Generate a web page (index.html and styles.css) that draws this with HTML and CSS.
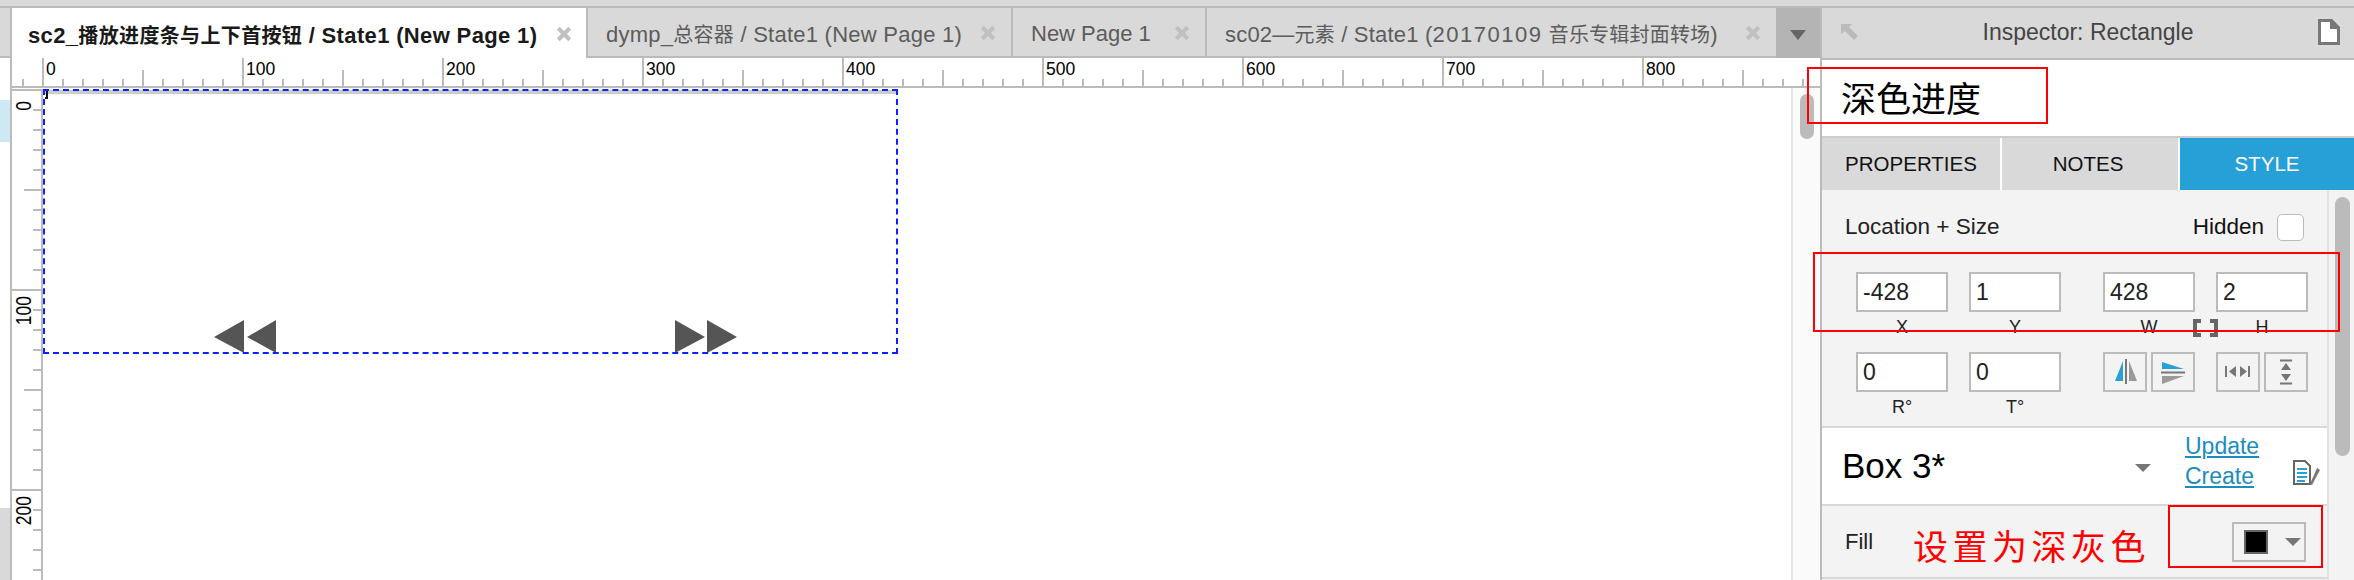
FILE: index.html
```html
<!DOCTYPE html>
<html lang="en">
<head>
  <meta charset="UTF-8">
  <title>Inspector: Rectangle</title>
  <link rel="stylesheet" href="styles.css">
</head>
<body>

<div class="app">
  <div class="topline"></div>
  <div class="main">

    <section class="workspace">
      <div class="tabs">
        <div class="tab-edge"></div>
        <div class="tab tab-active tab-1">
          <span>sc2_<span class="cjk">播放进度条与上下首按钮</span> / State1 (New Page 1)</span>
          <svg class="close" viewBox="0 0 14 14"><path d="M2 2l10 10M12 2L2 12"/></svg>
        </div>
        <div class="tab tab-2">
          <span>dymp_<span class="cjk">总容器</span> / State1 (New Page 1)</span>
          <svg class="close" viewBox="0 0 14 14"><path d="M2 2l10 10M12 2L2 12"/></svg>
        </div>
        <div class="tab tab-3">
          <span>New Page 1</span>
          <svg class="close" viewBox="0 0 14 14"><path d="M2 2l10 10M12 2L2 12"/></svg>
        </div>
        <div class="tab tab-4">
          <span>sc02—<span class="cjk">元素</span> / State1 (<span class="digits">20170109</span> <span class="cjk">音乐专辑封面转场</span>)</span>
          <svg class="close" viewBox="0 0 14 14"><path d="M2 2l10 10M12 2L2 12"/></svg>
        </div>
        <div class="tab-menu"><div class="tri tri-tab"></div></div>
      </div>

      <div class="sheet">
        <div class="edge">
          <div class="edge-blue"></div>
          <div class="edge-gray"></div>
        </div>
        <div class="sheet-body">
          <div class="hruler">
            <div class="hlabel">0</div>
            <div class="hlabel">100</div>
            <div class="hlabel">200</div>
            <div class="hlabel">300</div>
            <div class="hlabel">400</div>
            <div class="hlabel">500</div>
            <div class="hlabel">600</div>
            <div class="hlabel">700</div>
            <div class="hlabel">800</div>
          </div>
          <div class="sheet-row">
            <div class="vruler">
              <div class="vlabel"><span>0</span></div>
              <div class="vlabel"><span>100</span></div>
              <div class="vlabel"><span>200</span></div>
            </div>
            <div class="canvas">
              <div class="bar"></div>
              <div class="mark"></div>
              <svg class="arrows arrows-prev" viewBox="0 0 62 33"><path d="M30 0v33L0 17zM62 0v33L33 17z"/></svg>
              <svg class="arrows arrows-next" viewBox="0 0 62 33"><path d="M0 0v33l30-16zM32 0v33l30-16z"/></svg>
              <div class="selection"></div>
            </div>
            <div class="vscroll"><div class="vscroll-thumb"></div></div>
          </div>
        </div>
      </div>
    </section>

    <section class="inspector">
      <div class="insp-head">
        <svg class="icon-back" viewBox="0 0 17 16"><path d="M0 0h11L8 3l9 9-4 4-9-9-4 3z"/></svg>
        <span>Inspector: Rectangle</span>
        <svg class="icon-doc" viewBox="0 0 22 26"><path d="M1.500 1.500h12l7 7v16h-19z"/><path d="M13.500 1.500v7h7"/></svg>
      </div>
      <div class="insp-name">深色进度</div>
      <div class="insp-tabs">
        <div class="insp-tab">PROPERTIES</div>
        <div class="insp-tab insp-tab-notes">NOTES</div>
        <div class="insp-tab insp-tab-on">STYLE</div>
      </div>

      <div class="insp-body">
        <div class="insp-main">
          <div class="loc-row">
            <span>Location + Size</span>
            <div class="hidden-box">
              <span>Hidden</span>
              <div class="check"></div>
            </div>
          </div>

          <div class="field-row">
            <div class="field"><div class="num">-428</div><div class="field-label">X</div></div>
            <div class="field"><div class="num">1</div><div class="field-label">Y</div></div>
            <div class="field field-wide">
              <div class="num">428</div><div class="field-label">W</div>
              <svg class="icon-lock" viewBox="0 0 25 18"><path d="M8 2H2v14h6M17 2h6v14h-6"/></svg>
            </div>
            <div class="field"><div class="num">2</div><div class="field-label">H</div></div>
          </div>

          <div class="field-row field-row-2">
            <div class="field"><div class="num">0</div><div class="field-label">R°</div></div>
            <div class="field"><div class="num">0</div><div class="field-label">T°</div></div>
            <div class="field field-wide">
              <div class="icon-btns">
                <div class="icon-btn">
                  <svg viewBox="0 0 40 36">
                    <path class="blue" d="M10 27h8V7z"/>
                    <path class="grey" d="M24 7v20h8z"/>
                    <path class="rule" d="M21 5v25"/>
                  </svg>
                </div>
                <div class="icon-btn">
                  <svg viewBox="0 0 40 36">
                    <path class="blue" d="M9 8v7h22z"/>
                    <path class="grey" d="M9 22h22L9 30z"/>
                    <path class="rule" d="M8 18.500h24"/>
                  </svg>
                </div>
              </div>
            </div>
            <div class="field">
              <div class="icon-btns">
                <div class="icon-btn">
                  <svg viewBox="0 0 40 36">
                    <path class="dark" d="M18 12v11l-7-5.500zM22 12v11l7-5.500z"/>
                    <path class="rule" d="M8 12v11M31 12v11"/>
                  </svg>
                </div>
                <div class="icon-btn">
                  <svg viewBox="0 0 40 36">
                    <path class="dark" d="M20 9l-5 7h10zM20 27l-5-7h10z"/>
                    <path class="rule" d="M14 6.500h12M14 29.500h12"/>
                  </svg>
                </div>
              </div>
            </div>
          </div>

          <div class="box-row">
            <div class="box-name">Box 3*</div>
            <div class="tri tri-box"></div>
            <div class="box-links">
              <a href="#">Update</a>
              <a href="#">Create</a>
            </div>
            <svg class="icon-note" viewBox="0 0 27 25">
              <path class="note-page" d="M1 1h11l5 5v18H1z"/>
              <path class="note-lines" d="M4 9h10M4 13h10M4 17h10M4 21h8"/>
              <path class="note-pen" d="M24 8l3 2-8 15-2-1z"/>
            </svg>
          </div>

          <div class="fill-row">
            <span class="fill-label">Fill</span>
            <span class="fill-note">设置为深灰色</span>
            <div class="fill-btn">
              <div class="swatch"></div>
              <div class="tri tri-fill"></div>
            </div>
          </div>
        </div>
        <div class="insp-gutter"><div class="insp-thumb"></div></div>
      </div>
    </section>
  </div>

  <!-- red notes drawn over the screen -->
  <div class="note note-name"></div>
  <div class="note note-size"></div>
  <div class="note note-fill"></div>
</div>

</body>
</html>
```

FILE: styles.css
```css
* {
  box-sizing: border-box;
}

html, body {
  margin: 0;
  height: 100%;
  overflow: hidden;
}

body {
  font-family: "Liberation Sans", "Noto Sans CJK SC", sans-serif;
  background-color: #fff;
  color: #111;
}

.app {
  position: relative;
  width: 2354px;
  height: 580px;
  overflow: hidden;
}

.topline {
  height: 8px;
  background-color: #d9d9d9;
  border-bottom: 2px solid #bbb;
}

.main {
  display: flex;
  height: 572px;
}

.workspace {
  width: 1820px;
  display: flex;
  flex-direction: column;
}

/* tabs */
.tabs {
  display: flex;
  height: 50px;
  flex: none;
}

.tab-edge {
  width: 10px;
  background-color: #d9d9d9;
  border-bottom: 2px solid #bbb;
}

.tab {
  display: flex;
  align-items: center;
  justify-content: space-between;
  padding: 0 15px 0 18px;
  background-color: #d9d9d9;
  border-right: 2px solid #bbb;
  border-bottom: 2px solid #bbb;
  color: #5c5c5c;
  font-size: 22px;
  white-space: nowrap;
}

.tab > span {
  margin-top: 3px;
}

.cjk {
  font-size: 20px;
}

.digits {
  letter-spacing: 1.500px;
}

.tab-active {
  background-color: #fff;
  border-left: 2px solid #bbb;
  border-bottom: none;
  color: #1a1a1a;
  font-weight: bold;
  padding-left: 16px;
  padding-right: 14px;
}

.tab-1 { width: 578px; letter-spacing: 0.350px; }
.tab-2 { width: 425px; letter-spacing: 0.250px; }
.tab-3 { width: 194px; }
.tab-4 { width: 569px; border-right: none; letter-spacing: 0.200px; }

.close {
  width: 16px;
  height: 16px;
  flex: none;
  margin-top: 1px;
}

.close path {
  fill: none;
  stroke: #c0c0c0;
  stroke-width: 3.500;
}

.tab-menu {
  flex: 1;
  display: flex;
  align-items: center;
  justify-content: center;
  background-color: #b4b4b4;
  padding-top: 4px;
}

.tri {
  width: 0;
  height: 0;
  border-style: solid;
  border-color: #777 transparent transparent transparent;
}

.tri-tab {
  border-width: 10px 8px 0 8px;
  border-top-color: #666;
}

/* sheet and rulers */
.sheet {
  flex: 1;
  display: flex;
  min-height: 0;
}

.edge {
  width: 12px;
  flex: none;
  display: flex;
  flex-direction: column;
  border-right: 2px solid #bbb;
}

.edge-blue {
  height: 42px;
  margin-top: 42px;
  background-color: #cde9f3;
}

.edge-gray {
  margin-top: auto;
  height: 72px;
  background-color: #d9d9d9;
}

.sheet-body {
  flex: 1;
  display: flex;
  flex-direction: column;
  min-width: 0;
}

.hruler {
  display: flex;
  height: 30px;
  flex: none;
  padding-left: 30px;
  border-bottom: 2px solid #bbb;
  background-image:
    linear-gradient(90deg, #bbb 2px, transparent 2px),
    linear-gradient(90deg, #bbb 2px, transparent 2px),
    linear-gradient(90deg, #bbb 2px, transparent 2px);
  background-size: 200px 28px, 100px 16px, 20px 7px;
  background-position: 30px bottom, 30px bottom, 30px bottom;
  background-repeat: repeat-x;
}

.hlabel {
  width: 200px;
  flex: none;
  padding: 1px 0 0 4px;
  font-size: 17.500px;
  line-height: 20px;
  color: #000;
}

.sheet-row {
  flex: 1;
  display: flex;
  min-height: 0;
}

.vruler {
  width: 31px;
  flex: none;
  border-right: 2px solid #bbb;
  margin-top: 1px;
  background-image:
    linear-gradient(#bbb 2px, transparent 2px),
    linear-gradient(#bbb 2px, transparent 2px),
    linear-gradient(#bbb 2px, transparent 2px);
  background-size: 29px 200px, 17px 100px, 8px 20px;
  background-position: right top;
  background-repeat: repeat-y;
}

.vlabel {
  height: 200px;
  padding: 7px 0 0 2px;
  font-size: 17.500px;
  line-height: 18px;
  color: #000;
}

.vlabel span {
  display: inline-block;
  writing-mode: vertical-rl;
  transform: rotate(180deg) scaleX(1.25);
}

.canvas {
  position: relative;
  flex: 1;
}

.bar {
  position: absolute;
  left: 0;
  top: 2px;
  width: 854px;
  height: 4px;
  background-color: #ccc;
}

.mark {
  position: absolute;
  left: 2px;
  top: 2px;
  width: 3px;
  height: 9px;
  border-right: 2px solid #111;
  border-bottom: 2px solid #111;
}

.arrows {
  position: absolute;
  top: 232px;
  width: 62px;
  height: 33px;
  fill: #555;
}

.arrows-prev { left: 171px; }
.arrows-next { left: 632px; }

.selection {
  position: absolute;
  left: 0;
  top: 1px;
  width: 855px;
  height: 265px;
  border: 2px dashed #0a22ff;
}

.vscroll {
  width: 29px;
  flex: none;
  padding: 6px 6px 0 7px;
  background-color: #fafafa;
  border-left: 2px solid #e6e6e6;
}

.vscroll-thumb {
  height: 45px;
  border-radius: 8px;
  background-color: #bbb;
}

/* inspector */
.inspector {
  flex: 1;
  display: flex;
  flex-direction: column;
  border-left: 2px solid #bbb;
  min-width: 0;
}

.insp-head {
  height: 52px;
  flex: none;
  display: flex;
  align-items: center;
  justify-content: space-between;
  padding: 0 14px 2px 19px;
  background-color: #d9d9d9;
  border-bottom: 2px solid #bbb;
  color: #444;
  font-size: 23px;
}

.icon-back {
  width: 17px;
  height: 16px;
  fill: #bbb;
}

.icon-doc {
  width: 22px;
  height: 26px;
}

.icon-doc path {
  fill: #fff;
  stroke: #777;
  stroke-width: 3;
}

.icon-doc path + path {
  fill: #777;
}

.insp-name {
  height: 78px;
  flex: none;
  padding: 18px 0 0 19px;
  border-bottom: 2px solid #ccc;
  color: #000;
  font-size: 35px;
  line-height: 44px;
}

.insp-tabs {
  display: grid;
  grid-template-columns: 178px 176px 1fr;
  column-gap: 2px;
  height: 52px;
  flex: none;
}

.insp-tab {
  display: flex;
  align-items: center;
  justify-content: center;
  background-color: #d9d9d9;
  font-size: 20.500px;
}

.insp-tab-notes {
  padding-right: 4px;
}

.insp-tab-on {
  background-color: #27a0d8;
  color: #fff;
}

.insp-body {
  flex: 1;
  display: flex;
  background-color: #f3f3f3;
  min-height: 0;
}

.insp-main {
  flex: 1;
  border-right: 2px solid #e2e2e2;
  min-width: 0;
}

.insp-gutter {
  width: 25px;
  flex: none;
  padding: 7px 4px 0 6px;
}

.insp-thumb {
  height: 259px;
  border-radius: 8px;
  background-color: #bbb;
}

.loc-row {
  display: flex;
  align-items: center;
  justify-content: space-between;
  height: 74px;
  margin-bottom: 8px;
  padding: 0 23px;
  font-size: 22.500px;
  color: #222;
}

.hidden-box {
  display: flex;
  align-items: center;
  gap: 13px;
  color: #111;
}

.check {
  width: 27px;
  height: 27px;
  background-color: #fff;
  border: 1px solid #bbb;
  border-radius: 5px;
}

.field-row {
  display: flex;
  gap: 21px;
  padding-left: 34px;
}

.field-row-2 {
  margin-top: 10px;
  padding-bottom: 4px;
  border-bottom: 2px solid #d8d8d8;
}

.field {
  position: relative;
  width: 92px;
  flex: none;
}

.field-wide {
  margin-left: 21px;
}

.num {
  height: 40px;
  padding-left: 5px;
  background-color: #fff;
  border: 2px solid #bbb;
  font-size: 23px;
  line-height: 36px;
  color: #222;
}

.field-label {
  height: 30px;
  text-align: center;
  font-size: 18px;
  line-height: 31px;
  color: #222;
}

.icon-lock {
  position: absolute;
  left: 90px;
  top: 47px;
  width: 25px;
  height: 18px;
  fill: none;
  stroke: #666;
  stroke-width: 4;
}

.icon-btns {
  display: flex;
  gap: 4px;
}

.icon-btn {
  width: 44px;
  height: 40px;
  border: 2px solid #bbb;
}

.icon-btn svg {
  display: block;
  width: 40px;
  height: 36px;
}

.blue { fill: #27a0d8; }
.grey { fill: #999; }
.dark { fill: #777; }

.rule {
  fill: none;
  stroke: #777;
  stroke-width: 2;
}

.box-row {
  display: flex;
  align-items: center;
  height: 78px;
  padding-left: 20px;
  background-color: #fff;
  border-bottom: 2px solid #d8d8d8;
}

.box-name {
  width: 293px;
  font-size: 35px;
  color: #000;
}

.tri-box {
  border-width: 8px 8px 0 8px;
  margin-top: 4px;
}

.box-links {
  display: flex;
  flex-direction: column;
  gap: 3px;
  margin: 0 0 10px 34px;
  font-size: 23px;
  line-height: 27px;
}

.box-links a {
  color: #1c8cc0;
}

.icon-note {
  width: 27px;
  height: 25px;
  margin: 12px 0 0 34px;
}

.note-page {
  fill: #fff;
  stroke: #666;
  stroke-width: 2;
}

.note-lines {
  fill: none;
  stroke: #27a0d8;
  stroke-width: 2;
}

.note-pen {
  fill: #777;
}

.fill-row {
  display: flex;
  align-items: center;
  height: 73px;
  padding-left: 23px;
  border-bottom: 2px solid #d8d8d8;
}

.fill-label {
  width: 68px;
  font-size: 22px;
  color: #222;
}

.fill-note {
  width: 319px;
  margin-top: 6px;
  color: #f00;
  font-size: 35px;
  letter-spacing: 4.500px;
  white-space: nowrap;
}

.fill-btn {
  display: flex;
  align-items: center;
  gap: 17px;
  width: 74px;
  height: 40px;
  padding-left: 10px;
  border: 2px solid #bbb;
}

.swatch {
  width: 24px;
  height: 24px;
  background-color: #000;
  border: 2px solid #666;
}

.tri-fill {
  border-width: 8px 8px 0 8px;
}

/* red notes */
.note {
  position: absolute;
  border: 2px solid #f00;
}

.note-name {
  left: 1807px;
  top: 67px;
  width: 241px;
  height: 57px;
}

.note-size {
  left: 1813px;
  top: 252px;
  width: 527px;
  height: 80px;
}

.note-fill {
  left: 2168px;
  top: 505px;
  width: 155px;
  height: 63px;
}
```
